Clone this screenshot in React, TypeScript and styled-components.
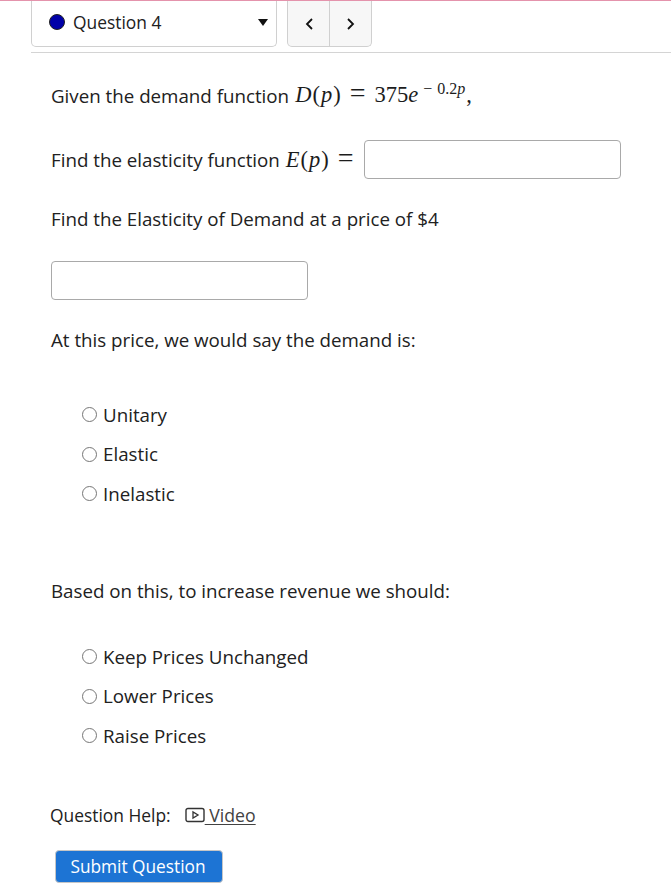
import styled, { createGlobalStyle } from 'styled-components';

const GlobalStyle = createGlobalStyle`
  html, body {
    margin: 0;
    padding: 0;
    background: #ffffff;
    font-family: "Open Sans", sans-serif;
    color: #212121;
  }
`;

const Wrapper = styled.div`
  width: 671px;
  height: 885px;
  overflow: hidden;
  border-top: 1px solid #e493ac;
  box-sizing: border-box;
  padding-left: 31px;
`;

const Toolbar = styled.div`
  display: flex;
  gap: 10px;
  height: 46px;
`;

const SelectBox = styled.div`
  width: 246px;
  box-sizing: border-box;
  display: flex;
  align-items: center;
  padding: 0 8px 3px 17px;
  border: 1px solid #d0d0d0;
  border-top: none;
  border-radius: 0 0 5px 5px;
  font-size: 17.4px;
`;

const Dot = styled.span`
  width: 16px;
  height: 16px;
  box-sizing: border-box;
  border-radius: 50%;
  background: #0000a8;
  border: 1px solid #222;
  margin-right: 8px;
`;

const Caret = styled.span`
  margin-left: auto;
  width: 0;
  height: 0;
  border-left: 5px solid transparent;
  border-right: 5px solid transparent;
  border-top: 7px solid #111;
`;

const NavGroup = styled.div`
  display: flex;
  width: 85px;
`;

const NavButton = styled.div<{ side: 'left' | 'right' }>`
  flex: 1;
  display: flex;
  align-items: center;
  justify-content: center;
  background: #f7f7f7;
  border: 1px solid #d0d0d0;
  border-top: none;
  border-left-width: ${(props) => (props.side === 'left' ? '1px' : '0')};
  border-radius: ${(props) => (props.side === 'left' ? '0 0 0 5px' : '0 0 5px 0')};
`;

const Divider = styled.div`
  height: 1px;
  background: #d4d4d4;
  margin-top: 5px;
`;

const Content = styled.div`
  padding-left: 20px;
  font-size: 18.74px;
  line-height: 26px;
`;

const Line = styled.div<{ top: number }>`
  display: flex;
  align-items: center;
  margin-top: ${(props) => props.top}px;
  white-space: pre;
`;

const MathText = styled.span`
  display: inline-flex;
  align-items: baseline;
  font-family: "Liberation Serif", serif;
  font-size: 22.5px;
  margin-left: 6px;
  color: #1c1c1c;
`;

const Var = styled.i`
  font-style: italic;
`;

const Paren = styled.span`
  padding: 0 1px;
`;

const Op = styled.span<{ last?: boolean }>`
  font-size: 28px;
  line-height: 20px;
  margin: 0 ${(props) => (props.last ? '8px' : '9px')} 0 8px;
`;

const Sup = styled.span`
  font-size: 16px;
  position: relative;
  top: -8px;
  margin-left: 5px;
  margin-right: 1px;
`;

const Minus = styled.span`
  margin-right: 5px;
`;

const TextInput = styled.div<{ wide?: boolean }>`
  width: 257px;
  height: 39px;
  box-sizing: border-box;
  border: 1px solid #a9a9a9;
  border-radius: 4px;
  background: #fff;
  margin-left: ${(props) => (props.wide ? '2px' : '0')};
`;

const OptionList = styled.div<{ top: number }>`
  margin-top: ${(props) => props.top}px;
  padding-left: 31px;
  display: flex;
  flex-direction: column;
  gap: 13.5px;
`;

const Option = styled.label`
  display: flex;
  align-items: center;
  gap: 6px;
`;

const Radio = styled.span`
  width: 15px;
  height: 15px;
  box-sizing: border-box;
  border: 1px solid #767676;
  border-radius: 50%;
  background: #fff;
`;

const HelpRow = styled.div`
  display: flex;
  align-items: center;
  margin: 53px 0 0 -1px;
  font-size: 17.4px;
`;

const VideoLink = styled.a`
  display: flex;
  align-items: center;
  margin-left: 14px;
  color: #424242;
`;

const VideoLabel = styled.span`
  white-space: pre;
  font-size: 17.7px;
  text-decoration: underline;
  text-underline-offset: 2px;
`;

const SubmitButton = styled.button`
  display: block;
  margin: 22px 0 0 4px;
  width: 168px;
  height: 33px;
  padding: 0 2px 0 0;
  background: #1d74d4;
  color: #fff;
  border: 1px solid #c6c6c6;
  border-radius: 4px;
  font-family: inherit;
  font-size: 17.3px;
`;

const demandOptions = ['Unitary', 'Elastic', 'Inelastic'];
const revenueOptions = ['Keep Prices Unchanged', 'Lower Prices', 'Raise Prices'];

const Chevron = ({ flip }: { flip?: boolean }) => (
  <svg width="10" height="14" viewBox="0 0 10 14" fill="none">
    <path
      d={flip ? 'M2 2l5 5-5 5' : 'M8 2L3 7l5 5'}
      stroke="#111"
      strokeWidth="1.8"
    />
  </svg>
);

const VideoIcon = () => (
  <svg width="20" height="16" viewBox="0 0 20 16" fill="none">
    <rect x="1" y="1.5" width="18" height="13" rx="2" stroke="#333" strokeWidth="1.4" />
    <path d="M8 5v6l5-3z" stroke="#333" strokeWidth="1.3" />
  </svg>
);

const App = () => {
  return (
    <Wrapper>
      <GlobalStyle />
      <Toolbar>
        <SelectBox>
          <Dot />
          Question 4
          <Caret />
        </SelectBox>
        <NavGroup>
          <NavButton side="left">
            <Chevron />
          </NavButton>
          <NavButton side="right">
            <Chevron flip />
          </NavButton>
        </NavGroup>
      </Toolbar>
      <Divider />
      <Content>
        <Line top={29}>
          Given the demand function
          <MathText>
            <Var>D</Var>
            <Paren>(</Paren>
            <Var>p</Var>
            <Paren>)</Paren>
            <Op>=</Op>
            375<Var>e</Var>
            <Sup>
              <Minus>−</Minus>
              0.2<Var>p</Var>
            </Sup>
            ,
          </MathText>
        </Line>
        <Line top={30}>
          Find the elasticity function
          <MathText>
            <Var>E</Var>
            <Paren>(</Paren>
            <Var>p</Var>
            <Paren>)</Paren>
            <Op last>=</Op>
          </MathText>
          <TextInput wide />
        </Line>
        <Line top={27}>Find the Elasticity of Demand at a price of $4</Line>
        <Line top={29}>
          <TextInput />
        </Line>
        <Line top={27}>At this price, we would say the demand is:</Line>
        <OptionList top={48.8}>
          {demandOptions.map((option) => (
            <Option key={option}>
              <Radio />
              {option}
            </Option>
          ))}
        </OptionList>
        <Line top={71.2}>Based on this, to increase revenue we should:</Line>
        <OptionList top={39.8}>
          {revenueOptions.map((option) => (
            <Option key={option}>
              <Radio />
              {option}
            </Option>
          ))}
        </OptionList>
        <HelpRow>
          Question Help:
          <VideoLink>
            <VideoIcon />
            <VideoLabel> Video</VideoLabel>
          </VideoLink>
        </HelpRow>
        <SubmitButton>Submit Question</SubmitButton>
      </Content>
    </Wrapper>
  );
};

export default App;
